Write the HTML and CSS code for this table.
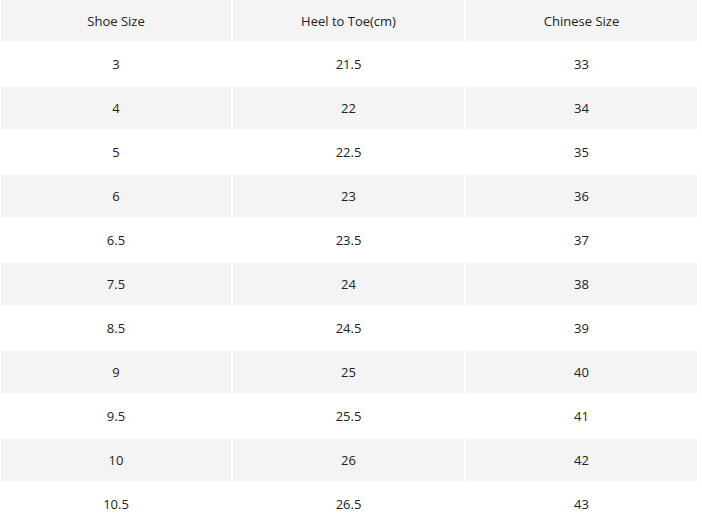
FILE: index.html
```html
<!DOCTYPE html>
<html>
<head>
<meta charset="utf-8">
<link rel="stylesheet" href="styles.css">
</head>
<body>
<table class="size-table">
  <thead>
    <tr><th>Shoe Size</th><th>Heel to Toe(cm)</th><th>Chinese Size</th></tr>
  </thead>
  <tbody>
    <tr><td>3</td><td>21.5</td><td>33</td></tr>
    <tr><td>4</td><td>22</td><td>34</td></tr>
    <tr><td>5</td><td>22.5</td><td>35</td></tr>
    <tr><td>6</td><td>23</td><td>36</td></tr>
    <tr><td>6.5</td><td>23.5</td><td>37</td></tr>
    <tr><td>7.5</td><td>24</td><td>38</td></tr>
    <tr><td>8.5</td><td>24.5</td><td>39</td></tr>
    <tr><td>9</td><td>25</td><td>40</td></tr>
    <tr><td>9.5</td><td>25.5</td><td>41</td></tr>
    <tr><td>10</td><td>26</td><td>42</td></tr>
    <tr><td>10.5</td><td>26.5</td><td>43</td></tr>
  </tbody>
</table>
</body>
</html>
```
FILE: styles.css
```css
html, body {
  margin: 0;
  padding: 0;
  background: #fff;
}
.size-table {
  width: 698px;
  border-collapse: separate;
  border-spacing: 0;
  table-layout: fixed;
  font-family: "Open Sans", "Liberation Sans", sans-serif;
  font-size: 13px;
  color: #222;
}
.size-table th,
.size-table td {
  height: 42px;
  padding: 0;
  box-sizing: border-box;
  border: 1px solid #fff;
  text-align: center;
  vertical-align: middle;
  font-weight: normal;
}
.size-table th {
  height: 42px;
  border-top: 0;
  background: #f4f4f4;
}
.size-table td {
  height: 44px;
}
.size-table th:first-child,
.size-table td:first-child {
  width: 232px;
}
.size-table tbody tr:nth-child(even) td {
  background: #f4f4f4;
}
```
